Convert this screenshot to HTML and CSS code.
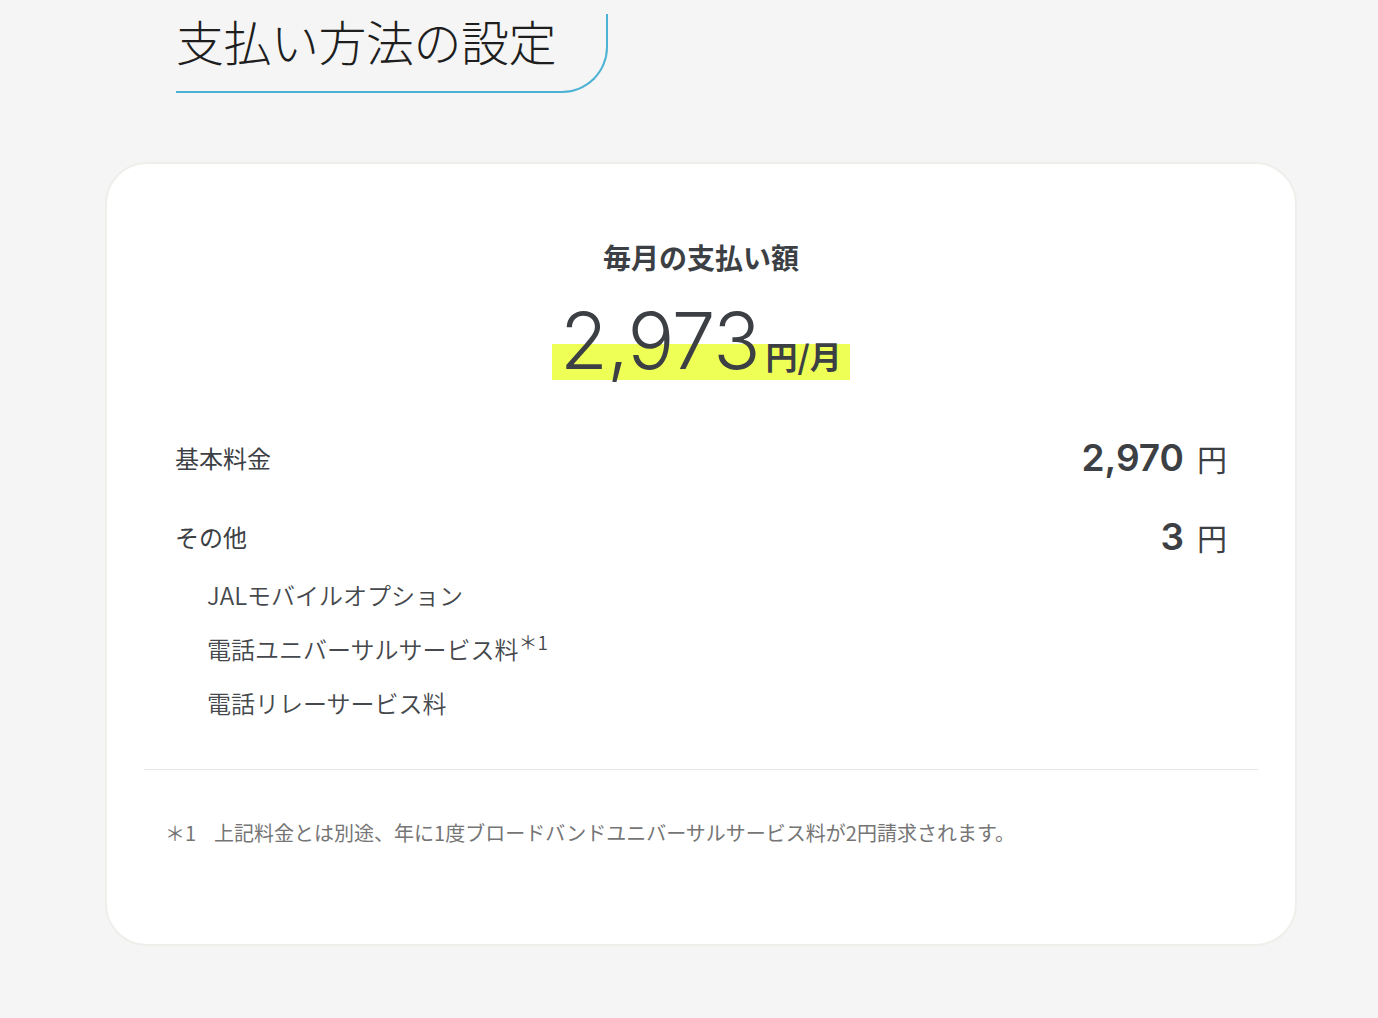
FILE: index.html
```html
<!DOCTYPE html>
<html lang="ja">
<head>
    <meta charset="UTF-8">
    <meta name="viewport" content="width=device-width, initial-scale=1.0">
    <title>支払い方法の設定</title>
    <link rel="stylesheet" href="styles.css">
</head>
<body>
    <div class="page-title">
        <h1>支払い方法の設定</h1>
    </div>

    <div class="card">
        <h2 class="monthly-title">毎月の支払い額</h2>
        <div class="monthly-amount">
            <span class="marker"><span class="big-num">2,973</span><span class="per">円/月</span></span>
        </div>

        <div class="fee-list">
            <div class="fee-row">
                <span class="fee-label">基本料金</span>
                <span class="fee-price"><span class="num">2,970</span><span class="yen">円</span></span>
            </div>
            <div class="fee-row">
                <span class="fee-label">その他</span>
                <span class="fee-price"><span class="num">3</span><span class="yen">円</span></span>
            </div>
            <ul class="sub-items">
                <li>JALモバイルオプション</li>
                <li>電話ユニバーサルサービス料<sup>＊1</sup></li>
                <li>電話リレーサービス料</li>
            </ul>
        </div>

        <hr class="divider">

        <p class="note"><span class="note-mark">＊1</span>上記料金とは別途、年に1度ブロードバンドユニバーサルサービス料が2円請求されます。</p>
    </div>
</body>
</html>
```

FILE: styles.css
```css
body {
    margin: 0;
    background-color: #f5f5f5;
    font-family: "Noto Sans CJK JP", "Noto Sans", sans-serif;
    color: #3c3f44;
}
.page-title {
    margin: 14px 0 0 176px;
    width: 430px;
    padding-bottom: 25px;
    border-bottom: 2px solid #4cb2d4;
    border-right: 2px solid #4cb2d4;
    border-bottom-right-radius: 46px;
}
.page-title h1 {
    margin: 0;
    font-size: 48px;
    line-height: 52px;
    font-weight: 300;
    color: #1e1e1e;
    letter-spacing: -0.5px;
}
.card {
    margin: 69px 0 0 105px;
    width: 1114px;
    background-color: #fff;
    border: 2px solid #eeeeea;
    border-radius: 42px;
    padding: 75px 37px 96px;
}
.monthly-title {
    margin: 0;
    text-align: center;
    font-size: 28px;
    line-height: 36px;
    font-weight: 700;
}
.monthly-amount {
    display: flex;
    justify-content: center;
    margin-top: 26px;
}
.marker {
    display: inline-flex;
    align-items: baseline;
    padding: 0 8px;
    background: linear-gradient(transparent 43px, #eeff55 43px, #eeff55 79px, transparent 79px);
}
.big-num {
    font-family: Inter, "Liberation Sans", sans-serif;
    font-size: 78px;
    line-height: 80px;
    font-weight: 300;
    letter-spacing: -1px;
}
.per {
    margin-left: 6px;
    font-size: 32px;
    line-height: 40px;
    font-weight: 700;
}
.fee-list {
    margin-top: 54px;
    padding: 0 31px;
}
.fee-row {
    display: flex;
    justify-content: space-between;
    align-items: center;
    height: 44px;
    margin-bottom: 35px;
}
.fee-row:nth-child(2) {
    margin-bottom: 10px;
}
.fee-label {
    font-size: 24px;
}
.fee-price {
    display: flex;
    align-items: baseline;
}
.num {
    font-family: Inter, "Liberation Sans", sans-serif;
    font-size: 37px;
    font-weight: 600;
}
.yen {
    margin-left: 13px;
    font-size: 30px;
}
.sub-items {
    list-style: none;
    margin: 0;
    padding: 0 0 0 32px;
}
.sub-items li {
    font-size: 24px;
    line-height: 54px;
    font-weight: 350;
    color: #45484c;
}
.sub-items sup {
    font-size: 19px;
    vertical-align: 9px;
    line-height: 0;
}
.divider {
    margin: 39px 0 0;
    border: none;
    border-top: 1px solid #e6e6e6;
}
.note {
    margin: 48px 0 0 21px;
    font-size: 20px;
    line-height: 30px;
    color: #757575;
}
.note-mark {
    margin-right: 18px;
}
```
